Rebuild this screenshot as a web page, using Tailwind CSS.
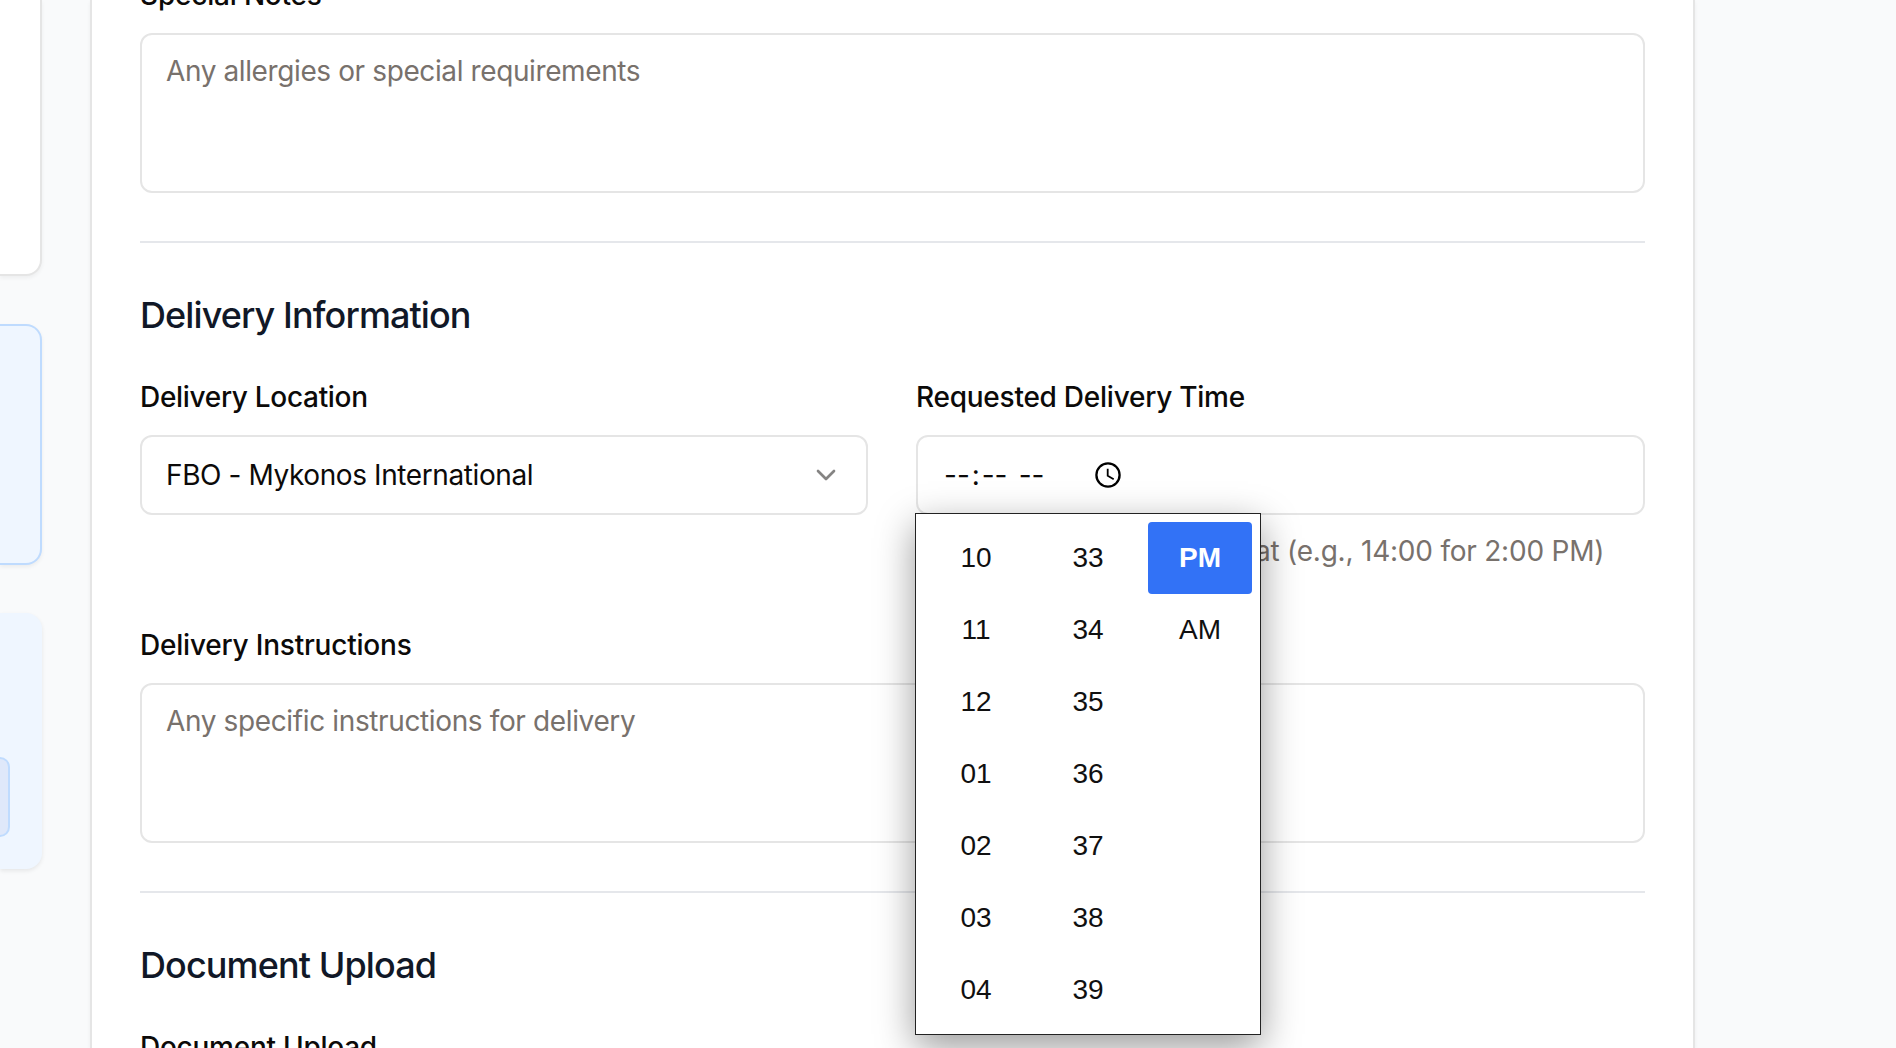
<!DOCTYPE html>
<html lang="en">
<head>
<meta charset="utf-8">
<title>Order form</title>
<script src="https://cdn.jsdelivr.net/npm/@tailwindcss/browser@4"></script>
</head>
<body class="h-[1048px] overflow-hidden bg-[#f9fafb] font-['Inter',sans-serif] text-[28px] leading-10 text-[#0c0a09]">
<div class="relative flex h-full gap-12">
  <aside class="flex w-[42px] shrink-0 flex-col gap-12">
    <div class="h-[276px] rounded-br-2xl border-r-2 border-b-2 border-[#e5e5e5] bg-white shadow-[0_2px_4px_rgba(0,0,0,0.05)]"></div>
    <div class="h-[241px] rounded-r-2xl border-2 border-l-0 border-[#bfdbfe] bg-[#eff6ff] shadow-[0_2px_4px_rgba(0,0,0,0.06)]"></div>
    <div class="h-[256px] rounded-r-2xl bg-[#eff6ff] pt-36 shadow-[0_2px_4px_rgba(0,0,0,0.08)]">
      <div class="h-20 w-2.5 rounded-r-xl border-2 border-l-0 border-[#bfdbfe] bg-[#dfe8fa]"></div>
    </div>
  </aside>

  <main class="flex h-full w-[1605px] shrink-0 flex-col overflow-hidden border-x-2 border-[#e5e5e5] bg-white px-12 shadow-[0_2px_4px_rgba(0,0,0,0.05)]">
    <section class="flex h-[241px] shrink-0 flex-col">
      <label class="-mt-[25px] h-[58px] shrink-0 font-medium tracking-[-0.2px]">Special Notes</label>
      <div class="h-40 shrink-0 rounded-xl border-2 border-[#e5e5e5] px-6 py-4 tracking-[-0.39px] text-[#78716c]">Any allergies or special requirements</div>
    </section>

    <section class="flex h-[650px] shrink-0 flex-col border-t-2 border-[#e5e7eb] pt-12">
      <h2 class="h-14 text-[36px] leading-[48px] font-medium tracking-[-0.9px] text-[#111827]">Delivery Information</h2>
      <div class="mt-[30px] grid grid-cols-[728px_1fr] gap-12">
        <div class="flex flex-col">
          <label class="h-[58px] font-medium tracking-[-0.31px]">Delivery Location</label>
          <div class="flex h-20 items-center justify-between rounded-xl border-2 border-[#e5e5e5] px-6 tracking-[-0.4px]">
            <span>FBO - Mykonos International</span>
            <svg class="size-8" viewBox="0 0 24 24" fill="none" stroke="#858483" stroke-width="2" stroke-linecap="round" stroke-linejoin="round"><path d="m6 9 6 6 6-6"/></svg>
          </div>
        </div>
        <div class="flex flex-col">
          <label class="h-[58px] font-medium tracking-[-0.25px]">Requested Delivery Time</label>
          <div class="flex h-20 items-center rounded-xl border-2 border-[#e5e5e5] pl-[26px]">
            <span class="w-[151px] shrink-0 whitespace-pre [word-spacing:3.4px]">--<span class="px-[1.9px]">:</span>-- --</span>
            <svg class="size-[26px]" viewBox="0 0 26 26" fill="none" stroke="#000"><circle cx="13" cy="13" r="11.6" stroke-width="2.3"/><path d="M12.7 6.7v7l6 3.5" stroke-width="1.8"/></svg>
          </div>
          <p class="mt-4 tracking-[-0.22px] whitespace-nowrap text-[#78716c]"><span class="tracking-[-0.45px]">Enter time in 24-hour form</span>at (e.g., 14:00 for 2:00 PM)</p>
        </div>
      </div>
      <label class="mt-[54px] h-[58px] font-medium tracking-[-0.21px]">Delivery Instructions</label>
      <div class="h-40 shrink-0 rounded-xl border-2 border-[#e5e5e5] px-6 py-4 tracking-[-0.37px] text-[#78716c]">Any specific instructions for delivery</div>
    </section>

    <section class="flex shrink-0 flex-col border-t-2 border-[#e5e7eb] pt-12">
      <h2 class="h-14 text-[36px] leading-[48px] font-medium tracking-[-0.9px] text-[#111827]">Document Upload</h2>
      <label class="mt-[30px] font-medium tracking-[-0.26px]">Document Upload</label>
    </section>
  </main>

  <div class="absolute top-[513px] left-[915px] flex h-[522px] w-[346px] gap-2 border border-[#222] bg-white p-2 font-['Liberation_Sans',sans-serif] text-[28px] text-[#101010] shadow-[0_12px_36px_rgba(0,0,0,0.4)]">
    <ul class="w-[104px] text-center leading-[72px]">
      <li>10</li><li>11</li><li>12</li><li>01</li><li>02</li><li>03</li><li>04</li>
    </ul>
    <ul class="w-[104px] text-center leading-[72px]">
      <li>33</li><li>34</li><li>35</li><li>36</li><li>37</li><li>38</li><li>39</li>
    </ul>
    <ul class="w-[104px] text-center leading-[72px]">
      <li class="rounded bg-[#3272f6] font-bold text-white">PM</li><li>AM</li>
    </ul>
  </div>
</div>
</body>
</html>
